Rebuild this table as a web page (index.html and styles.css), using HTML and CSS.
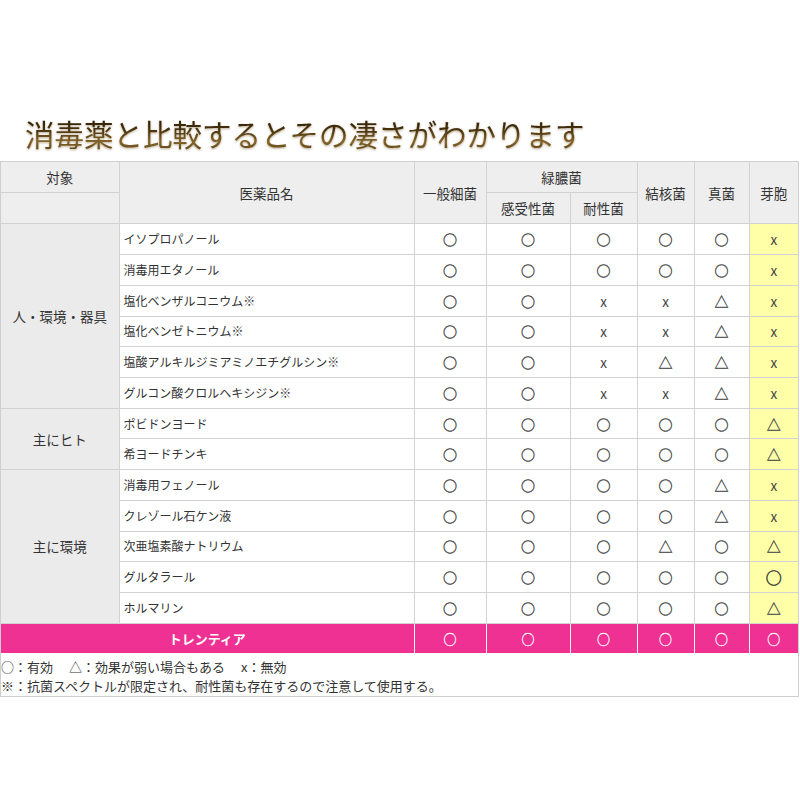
FILE: index.html
```html
<!DOCTYPE html>
<html lang="ja">
<head>
<meta charset="utf-8">
<title>消毒薬と比較</title>
<link rel="stylesheet" href="styles.css">
</head>
<body>
<div class="page">
  <h1 class="title">消毒薬と比較するとその凄さがわかります</h1>
  <div class="panel">
    <table class="cmp">
      <colgroup>
        <col class="c-target"><col class="c-name"><col class="c-gen"><col class="c-sens"><col class="c-res"><col class="c-tb"><col class="c-fung"><col class="c-spore">
      </colgroup>
      <thead>
        <tr>
          <th class="hd">対象</th>
          <th class="hd" rowspan="2">医薬品名</th>
          <th class="hd" rowspan="2">一般細菌</th>
          <th class="hd" colspan="2">緑膿菌</th>
          <th class="hd" rowspan="2">結核菌</th>
          <th class="hd" rowspan="2">真菌</th>
          <th class="hd" rowspan="2">芽胞</th>
        </tr>
        <tr>
          <th class="hd"></th>
          <th class="hd">感受性菌</th>
          <th class="hd">耐性菌</th>
        </tr>
      </thead>
      <tbody>
        <tr><td class="grp" rowspan="6">人・環境・器具</td><td class="name">イソプロパノール</td><td class="o">○</td><td class="o">○</td><td class="o">○</td><td class="o">○</td><td class="o">○</td><td class="sp">x</td></tr>
        <tr><td class="name">消毒用エタノール</td><td class="o">○</td><td class="o">○</td><td class="o">○</td><td class="o">○</td><td class="o">○</td><td class="sp">x</td></tr>
        <tr><td class="name">塩化ベンザルコニウム※</td><td class="o">○</td><td class="o">○</td><td>x</td><td>x</td><td class="tri">△</td><td class="sp">x</td></tr>
        <tr><td class="name">塩化ベンゼトニウム※</td><td class="o">○</td><td class="o">○</td><td>x</td><td>x</td><td class="tri">△</td><td class="sp">x</td></tr>
        <tr><td class="name">塩酸アルキルジミアミノエチグルシン※</td><td class="o">○</td><td class="o">○</td><td>x</td><td class="tri">△</td><td class="tri">△</td><td class="sp">x</td></tr>
        <tr><td class="name">グルコン酸クロルヘキシジン※</td><td class="o">○</td><td class="o">○</td><td>x</td><td>x</td><td class="tri">△</td><td class="sp">x</td></tr>
        <tr><td class="grp" rowspan="2">主にヒト</td><td class="name">ポビドンヨード</td><td class="o">○</td><td class="o">○</td><td class="o">○</td><td class="o">○</td><td class="o">○</td><td class="sp tri">△</td></tr>
        <tr><td class="name">希ヨードチンキ</td><td class="o">○</td><td class="o">○</td><td class="o">○</td><td class="o">○</td><td class="o">○</td><td class="sp tri">△</td></tr>
        <tr><td class="grp" rowspan="5">主に環境</td><td class="name">消毒用フェノール</td><td class="o">○</td><td class="o">○</td><td class="o">○</td><td class="o">○</td><td class="tri">△</td><td class="sp">x</td></tr>
        <tr><td class="name">クレゾール石ケン液</td><td class="o">○</td><td class="o">○</td><td class="o">○</td><td class="o">○</td><td class="tri">△</td><td class="sp">x</td></tr>
        <tr><td class="name">次亜塩素酸ナトリウム</td><td class="o">○</td><td class="o">○</td><td class="o">○</td><td class="tri">△</td><td class="o">○</td><td class="sp tri">△</td></tr>
        <tr><td class="name">グルタラール</td><td class="o">○</td><td class="o">○</td><td class="o">○</td><td class="o">○</td><td class="o">○</td><td class="sp o big">○</td></tr>
        <tr><td class="name">ホルマリン</td><td class="o">○</td><td class="o">○</td><td class="o">○</td><td class="o">○</td><td class="o">○</td><td class="sp tri">△</td></tr>
        <tr class="hl"><td colspan="2" class="hl-name">トレンティア</td><td class="o">○</td><td class="o">○</td><td class="o">○</td><td class="o">○</td><td class="o">○</td><td class="o">○</td></tr>
      </tbody>
    </table>
    <div class="notes">
      <p class="note"><span class="key">○：有効</span><span class="key">△：効果が弱い場合もある</span><span>x：無効</span></p>
      <p class="note">※：抗菌スペクトルが限定され、耐性菌も存在するので注意して使用する。</p>
    </div>
  </div>
</div>
</body>
</html>
```

FILE: styles.css
```css
html, body {
  margin: 0;
  padding: 0;
  background: #ffffff;
}

body {
  font-family: "Noto Sans CJK JP", "Noto Sans", sans-serif;
  color: #333333;
}

.page {
  width: 800px;
}

.title {
  margin: 113px 0 8px 25px;
  font-size: 29.5px;
  line-height: 40px;
  font-weight: 400;
  letter-spacing: 0;
  background: linear-gradient(180deg, #1e1403 0%, #45300c 40%, #85652a 72%, #50380f 100%);
  -webkit-background-clip: text;
  background-clip: text;
  color: transparent;
  filter: drop-shadow(0 1px 1px rgba(110, 80, 30, 0.5));
  white-space: nowrap;
}

.panel {
  box-sizing: border-box;
  width: 799px;
  border: 1px solid #cfcfcf;
}

.cmp {
  width: 100%;
  table-layout: fixed;
  border-collapse: collapse;
  border-style: hidden;
}

.c-target { width: 118px; }
.c-name { width: 295px; }
.c-gen { width: 72px; }
.c-sens { width: 84px; }
.c-res { width: 67px; }
.c-tb { width: 57px; }
.c-fung { width: 55px; }
.c-spore { width: 49px; }

.cmp th,
.cmp td {
  border: 1px solid #d2d2d2;
  padding: 0;
  height: 29.72px;
  text-align: center;
  vertical-align: middle;
  font-size: 13.5px;
  line-height: 16px;
  color: #444444;
}

.cmp th {
  background: #eeeeee;
  font-weight: 400;
  font-size: 13.5px;
  color: #333333;
  height: 30.2px;
}

.cmp td.grp {
  background: #ebebeb;
  font-size: 13.5px;
  color: #333333;
}

.cmp td.name {
  text-align: left;
  padding-left: 4px;
  font-size: 12px;
  color: #333333;
}

.cmp td.sp {
  background: #ffffa8;
}

.cmp td.tri {
  color: #505050;
  font-size: 14px;
  -webkit-text-stroke: 0.35px #505050;
}

.cmp td.o {
  font-size: 14px;
  color: #555555;
  -webkit-text-stroke: 0.45px #555555;
}

.cmp td.o.big {
  font-size: 16px;
  color: #4a4a3a;
  -webkit-text-stroke: 0.55px #4a4a3a;
}

.hl td {
  background: #ee3193;
  color: #ffffff;
  border-color: #ffffff;
  border-top-color: #d2d2d2;
  font-size: 12px;
}

.cmp .hl td.o {
  color: #ffffff;
  -webkit-text-stroke: 0.3px #ffffff;
  font-size: 13px;
}

.cmp .hl td.hl-name {
  font-weight: 700;
  font-size: 13px;
  color: #ffffff;
}

.notes {
  padding: 4px 0 1px;
}

.note {
  margin: 0;
  font-size: 13px;
  line-height: 19px;
  color: #333333;
  white-space: nowrap;
}

.key {
  margin-right: 16px;
}
```
